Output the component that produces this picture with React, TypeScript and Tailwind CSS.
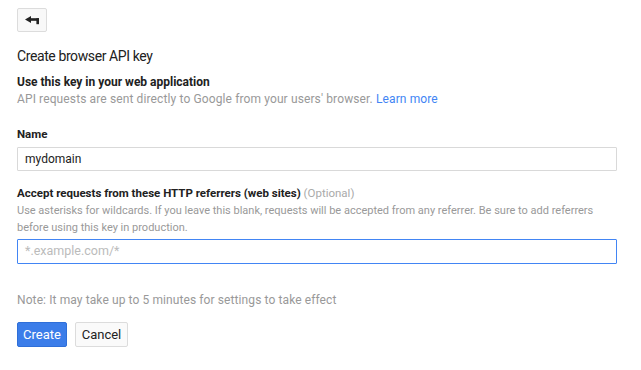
import { FC, PropsWithChildren } from 'react';

const BackIcon = (): JSX.Element => (
    <svg width="14" height="9" viewBox="0 0 14 9" fill="#222">
        <polygon points="0,3.5 6,0 6,7" />
        <rect x="5" y="2.2" width="9" height="2.6" />
        <rect x="11.4" y="2.2" width="2.6" height="6" />
    </svg>
);

type LabelProps = {
    className?: string
};

const FieldLabel: FC<LabelProps> = (props: PropsWithChildren<LabelProps>) => (
    <div className={`text-[11.5px] leading-[17px] font-bold text-[#212121] ${props.className ?? ''}`}>
        {props.children}
    </div>
);

export default function App(): JSX.Element {
    return (
        <div className="w-[641px] h-[370px] bg-white px-[17px] pt-[8px] font-['Roboto',sans-serif] text-[#212121]">
            <button
                type="button"
                className="flex items-center justify-center w-[30px] h-[24px] rounded-[2px] border border-[#dcdcdc] bg-[#f8f8f8]"
            >
                <BackIcon />
            </button>

            <h1 className="mt-[14px] text-[14px] leading-[20px] tracking-[-0.4px] font-normal text-[#212121]">
                Create browser API key
            </h1>

            <div className="mt-[8px] text-[12px] leading-[17px] font-bold text-[#212121]">
                Use this key in your web application
            </div>
            <p className="text-[12px] leading-[17px] tracking-[0.12px] text-[#999]">
                API requests are sent directly to Google from your users&apos; browser.{' '}
                <a className="text-[#4285f4]" href="#">Learn more</a>
            </p>

            <FieldLabel className="mt-[18px]">Name</FieldLabel>
            <div className="mt-[4px] w-[600px] h-[24px] border border-[#d9d9d9] rounded-[1px] px-[7px] flex items-center text-[12px] text-[#212121]">
                mydomain
            </div>

            <FieldLabel className="mt-[14px]">
                Accept requests from these HTTP referrers (web sites)
                <span className="font-normal text-[#aaa]"> (Optional)</span>
            </FieldLabel>
            <p className="text-[11px] leading-[17px] text-[#999] w-[600px]">
                Use asterisks for wildcards. If you leave this blank, requests will be accepted from any referrer. Be sure to add referrers before using this key in production.
            </p>
            <div className="mt-[3px] w-[600px] h-[25px] border border-[#4285f4] rounded-[1px] px-[7px] flex items-center text-[12.5px] text-[#bbb]">
                *.example.com/*
            </div>

            <p className="mt-[28px] text-[12px] leading-[17px] tracking-[0.1px] text-[#999]">
                Note: It may take up to 5 minutes for settings to take effect
            </p>

            <div className="mt-[13px] flex gap-[8px]">
                <button
                    type="button"
                    className="w-[50px] h-[25px] rounded-[2px] border border-[#2f6fd8] bg-[#3b7de9] text-white text-[13px]"
                >
                    Create
                </button>
                <button
                    type="button"
                    className="w-[53px] h-[25px] rounded-[2px] border border-[#dcdcdc] bg-[#fafafa] text-[#222] text-[13px]"
                >
                    Cancel
                </button>
            </div>
        </div>
    );
}
